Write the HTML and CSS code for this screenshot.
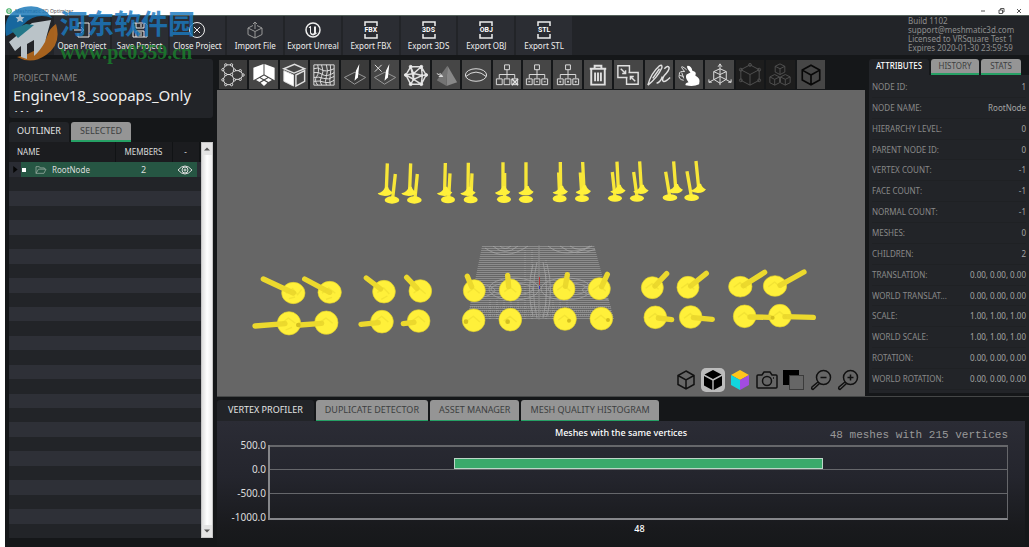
FILE: index.html
```html
<!DOCTYPE html>
<html lang="en">
<head>
<meta charset="utf-8">
<title>Meshmatic 3D Optimizer</title>
<link rel="stylesheet" href="styles.css">
</head>
<body>
<svg class="defs" aria-hidden="true">
  <defs>
    <symbol id="frame" viewBox="0 0 16 20"><path d="M2 6V2H14V6M2 14V18H14V14" fill="none" stroke="currentColor" stroke-width="1.5"/></symbol>
    <symbol id="tree" viewBox="0 0 29 29"><path d="M12 4h5v5h-5zM14.500 9v9M6.500 18v-4h16v4M3.500 18.500h6v6h-6zM11.500 18.500h6v6h-6zM19.500 18.500h6v6h-6z"/></symbol>
    <symbol id="cube" viewBox="0 0 22 22"><path d="M11 2L19 6.500V15.500L11 20L3 15.500V6.500ZM3 6.500L11 11L19 6.500M11 11V20"/></symbol>
  </defs>
</svg>
<div class="titlebar">
  <svg class="app-icon" viewBox="0 0 8 8"><circle cx="4" cy="4" r="3" fill="none" stroke="#3fae63" stroke-width="1.500"/><path d="M2 4h4" stroke="#2d7a48"/></svg>
  <span class="app-title">Meshmatic 3D Optimizer</span>
  <div class="window-buttons">
    <button aria-label="Minimize"><svg viewBox="0 0 8 8"><path d="M2 4h4"/></svg></button>
    <button aria-label="Restore"><svg viewBox="0 0 8 8"><path d="M2 3h3.500v3.500H2zM3.500 3V1.500H7V5H5.500"/></svg></button>
    <button aria-label="Close"><svg viewBox="0 0 8 8"><path d="M2 2l4 4M6 2L2 6"/></svg></button>
  </div>
</div>
<div class="app">
  <header class="header">
    <nav class="actions">
      <button><svg viewBox="0 0 20 20"><path d="M6 7V3H17V17H6V13M2 10H12M9 7l3 3-3 3"/></svg>Open Project</button>
      <button><svg viewBox="0 0 20 20"><path d="M3 3H15L17 5V17H3ZM6 3V8H14V3M11 4V7M6 17V11H14V17M8 13h4M8 15h4"/></svg>Save Project</button>
      <button><svg viewBox="0 0 20 20"><circle cx="10" cy="10" r="7.500"/><path d="M7 7l6 6M13 7l-6 6"/></svg>Close Project</button>
      <button><svg class="faint" viewBox="0 0 20 20"><path d="M8 5.500L3 8V14.500L10 18L17 14.500V8L12 5.500M3 8L10 11.500L17 8M10 11.500V18M10 9V2M8 4l2-2 2 2"/></svg>Import File</button>
      <button><svg viewBox="0 0 20 20"><circle cx="10" cy="10" r="7" stroke-width="1.500"/><path d="M5.500 8Q7 5.500 8 6V12.500Q9.500 14.500 11 13V6.500H13V12Q13 14 15 12Q13 15 10.500 15.500Q7 15 7 12.500V8Z" fill="currentColor" stroke="none"/></svg>Export Unreal</button>
      <button><span class="format"><svg viewBox="0 0 16 20"><use href="#frame"/></svg><b>FBX</b></span>Export FBX</button>
      <button><span class="format"><svg viewBox="0 0 16 20"><use href="#frame"/></svg><b>3DS</b></span>Export 3DS</button>
      <button><span class="format"><svg viewBox="0 0 16 20"><use href="#frame"/></svg><b>OBJ</b></span>Export OBJ</button>
      <button><span class="format"><svg viewBox="0 0 16 20"><use href="#frame"/></svg><b>STL</b></span>Export STL</button>
    </nav>
    <div class="license"><span>Build 1102</span><span>support@meshmatic3d.com</span><span>Licensed to VRSquare Test 1</span><span>Expires 2020-01-30 23:59:59</span></div>
  </header>

  <aside class="sidebar">
    <section class="project">
      <div class="project-label">PROJECT NAME</div>
      <h1 class="project-name">Enginev18_soopaps_Only (1).fbx</h1>
    </section>
    <div class="tabs side-tabs"><button class="tab active">OUTLINER</button><button class="tab">SELECTED</button></div>
    <div class="outliner">
      <div class="outline-list">
        <table class="outline-table">
          <thead><tr><th class="col-name">NAME</th><th class="col-members">MEMBERS</th><th class="col-eye">-</th></tr></thead>
          <tbody><tr>
            <td><div class="node"><svg class="arrow" viewBox="0 0 6 8"><path d="M1 0L6 4L1 8Z"/></svg><i class="square"></i><svg class="folder" viewBox="0 0 14 12"><path d="M1 10V2H5L6 3.500H11V5M1 10L4 5H13L10.500 10Z"/></svg>RootNode</div></td>
            <td class="count">2</td>
            <td class="eye-cell"><svg class="eye" viewBox="0 0 16 12"><path d="M1 6Q8-2 15 6Q8 14 1 6Z"/><circle cx="8" cy="6" r="3"/><circle cx="8" cy="6" r="1"/></svg></td>
          </tr></tbody>
        </table>
        <div class="stripes"><i></i><i></i><i></i><i></i><i></i><i></i><i></i><i></i><i></i><i></i><i></i><i></i><i></i><i></i><i></i><i></i><i></i><i></i><i></i><i></i><i></i><i></i><i></i><i></i><i></i></div>
      </div>
      <div class="scrollbar"><button aria-label="Scroll up"><svg viewBox="0 0 8 6"><path d="M1 4.500L4 1.500L7 4.500Z"/></svg></button><button aria-label="Scroll down"><svg viewBox="0 0 8 6"><path d="M1 1.500L4 4.500L7 1.500Z"/></svg></button></div>
    </div>
  </aside>

  <main class="stage">
    <div class="tools">
      <button class="dark" aria-label="Molecule"><svg viewBox="0 0 29 29"><path d="M7 4h6l3 5-3 5H7L4 9zM7 14h6l3 5.500-3 5H7l-3-5zM16 10h6l3 4.500-3 4.500h-6"/><g fill="#3a3a3a"><circle cx="7" cy="4" r="1.200"/><circle cx="13" cy="4" r="1.200"/><circle cx="4" cy="9" r="1.200"/><circle cx="16" cy="9.500" r="1.200"/><circle cx="7" cy="14" r="1.200"/><circle cx="13" cy="14" r="1.200"/><circle cx="22" cy="10" r="1.200"/><circle cx="25" cy="14.500" r="1.200"/><circle cx="22" cy="19" r="1.200"/><circle cx="16" cy="19.500" r="1.200"/><circle cx="4" cy="19.500" r="1.200"/><circle cx="7" cy="24.500" r="1.200"/><circle cx="13" cy="24.500" r="1.200"/></g></svg></button>
      <button aria-label="Floor grid"><svg viewBox="0 0 29 29"><g fill="#fff" stroke="none"><path d="M3.500 7L14 3V14L3.500 20ZM15 3L25.500 7V20L15 14Z"/><path d="M14.500 15L18 17L14.500 19L11 17ZM10 17.700L13.300 19.700L9.800 21.700L6.300 19.700ZM19 17.700L22.700 19.700L19.200 21.700L15.700 19.700ZM14.500 20.500L18 22.500L14.500 26L11 22.500Z"/></g></svg></button>
      <button aria-label="Bounding box"><svg viewBox="0 0 29 29"><path fill="#fff" d="M4 10L14 14.500V26L4 21Z"/><path stroke-width="1.500" d="M4 8L15 3.500L25.500 8L14.500 12.500ZM16.500 14.500L25.500 10V21L16.500 26Z"/></svg></button>
      <button aria-label="Wireframe"><svg viewBox="0 0 29 29"><path d="M4 4H25V25H4ZM8 4Q10 12 7 16T8 25M12 4Q15 11 12 16T12 25M17 4Q19 10 17 16T17 25M21 4Q22 10 21 15T21 25M4 8Q8 6 12 9T25 8M4 12Q9 11 13 14T25 12M4 17Q9 16 14 18T25 16M4 21Q10 20 15 22T25 20"/></svg></button>
      <button class="dark" aria-label="Show normals"><svg viewBox="0 0 29 29"><path class="thin" d="M3.500 17L14.500 11.500L25.500 17L14 24Z"/><path fill="#fff" stroke="none" d="M19 3L17.500 17L14 20.500L15.500 10Z"/></svg></button>
      <button aria-label="Remove normals"><svg viewBox="0 0 29 29"><path class="thin" d="M3.500 17L14.500 11.500L25.500 17L14 24Z"/><path fill="#fff" stroke="none" d="M19 3L17.500 17L14 20.500L15.500 10Z"/><path d="M4 4l7 7M11 4l-7 7"/></svg></button>
      <button aria-label="Mesh nodes"><svg viewBox="0 0 29 29"><path stroke-width="1.500" d="M9 6L20 6L25 14.500L20 24H9L4 14.500ZM9 6L12 13L20 6L21 15L25 14.500M12 13L4 14.500L12 19L9 24M12 13L21 15L12 19ZM21 15L20 24L12 19M9 6L12 19"/><g fill="#eee"><circle cx="9" cy="6" r="1.500"/><circle cx="20" cy="6" r="1.500"/><circle cx="25" cy="14.500" r="1.500"/><circle cx="20" cy="24" r="1.500"/><circle cx="9" cy="24" r="1.500"/><circle cx="4" cy="14.500" r="1.500"/><circle cx="12" cy="13" r="1"/><circle cx="21" cy="15" r="1"/><circle cx="12" cy="19" r="1"/></g></svg></button>
      <button aria-label="Pyramid"><svg viewBox="0 0 29 29"><path fill="#888" stroke="none" d="M16 5L26 22L15 26Z"/><path fill="#747474" stroke="none" d="M16 5L15 26L5 20Z"/><path d="M5 13l6 3M8 12.500l3 3.500-4 0"/></svg></button>
      <button aria-label="Ring"><svg viewBox="0 0 29 29"><ellipse cx="14.500" cy="14.500" rx="11" ry="6.500"/><path d="M4 16Q14.500 7 25 16"/></svg></button>
      <button aria-label="Delete branch"><svg viewBox="0 0 29 29"><use href="#tree"/><path stroke-width="1.500" d="M19.500 18.500l6.500 6.500M26 18.500l-6.500 6.500"/></svg></button>
      <button aria-label="Collapse branch"><svg viewBox="0 0 29 29"><use href="#tree"/><path d="M5.500 21.500h2M13.500 21.500h2M21.500 21.500h2"/></svg></button>
      <button aria-label="Group branch"><svg viewBox="0 0 29 29"><use href="#tree"/><path d="M6 21h1v1H6zM14 21h1v1h-1zM22 21h1v1h-1z"/></svg></button>
      <button aria-label="Delete"><svg viewBox="0 0 29 29"><path stroke-width="2" d="M6 8H23M11 7V5H18V7M7.500 9V24.500H21.500V9M11.500 12V21M14.500 12V21M17.500 12V21"/></svg></button>
      <button aria-label="Merge"><svg viewBox="0 0 29 29"><path stroke-width="1.500" d="M14 17H4V5H16V12M15 12H25V24H13V17M7 8l5 5M12 9.500V13H8.500M22 21l-5-5M17 19.500V16H20.500"/></svg></button>
      <button aria-label="Stitch"><svg viewBox="0 0 29 29"><path stroke-width="1.500" d="M3 25Q6 13 15 5Q18 3 17.500 7Q13 17 3 25M8 18L15 8M20 8Q24 4 25 7Q25 10 20 15Q17 20 19 21Q21 22 26 17M12 23Q16 22 18 16"/></svg></button>
      <button aria-label="Simplify mesh"><svg viewBox="0 0 29 29"><path d="M12 9Q6 4 7 7L10 11Q4 10 4.500 14Q3 19 9 20M7 12l2 6M5 15l4 1"/><path fill="#fff" stroke="none" d="M16 12Q11 6 13 5Q17 5 18 10Q23 11 21 15Q27 18 25 24Q19 27 11 25Q10 23 14 22Q10 17 12 14Z"/></svg></button>
      <button aria-label="Pivot"><svg viewBox="0 0 29 29"><path d="M14.500 3V25M12.500 6l2-3 2 3M14.500 16L3 22M14.500 16L26 22M3 19v3h3M26 19v3h-3M8 11L14.500 8L21 11V19L14.500 23L8 19ZM8 11L14.500 14L21 11"/></svg></button>
      <button class="off" aria-label="Cube nodes" disabled><svg viewBox="0 0 29 29"><path d="M14.500 4L24 9V20L14.500 25L5 20V9ZM5 9L14.500 14L24 9M14.500 14V25"/><circle cx="14.500" cy="4" r="1.500"/><circle cx="24" cy="9" r="1.500"/><circle cx="24" cy="20" r="1.500"/><circle cx="5" cy="20" r="1.500"/><circle cx="5" cy="9" r="1.500"/></svg></button>
      <button class="off" aria-label="Cube stack" disabled><svg viewBox="0 0 29 29"><path d="M14.500 3l5 2.500v6l-5 2.500-5-2.500v-6zM9.500 5.500l5 2.500 5-2.500M14.500 8v6M9 14l5 2.500v6L9 25l-5-2.500v-6zM4 16.500L9 19l5-2.500M9 19v6M20 14l5 2.500v6L20 25l-5-2.500v-6zM15 16.500l5 2.500 5-2.500M20 19v6"/></svg></button>
      <button class="ink" aria-label="Cube"><svg viewBox="0 0 22 22"><use href="#cube"/></svg></button>
    </div>
    <div class="viewport">
      <svg class="scene" viewBox="217 90 648 306" preserveAspectRatio="xMidYMid slice" role="img" aria-label="Engine valves in the 3D view">
        <defs>
          <pattern id="lines" width="3" height="2" patternUnits="userSpaceOnUse"><path d="M0 .5H3" stroke="#aaa" stroke-width=".8" opacity=".7"/></pattern>
          <clipPath id="floor"><path d="M482 246L594 245L614 319L467 320Z"/></clipPath>
        </defs>
        <g clip-path="url(#floor)">
          <path fill="url(#lines)" d="M460 240H620V325H460Z"/>
          <g fill="none" stroke="#b0b0b0" stroke-width="1" opacity=".6">
            <ellipse cx="512" cy="289" rx="21" ry="6"/><ellipse cx="514" cy="289" rx="25" ry="11"/><ellipse cx="568" cy="289" rx="20" ry="6"/><ellipse cx="566" cy="289" rx="25" ry="11"/>
            <path d="M537 262Q530 290 537 318M533 264Q526 290 533 316M543 262Q550 290 543 318M547 264Q554 290 547 316"/>
            <path d="M485 248Q505 262 528 246M493 246Q505 257 518 246M500 246Q505 251 511 246M548 246Q565 260 592 246M560 246Q575 258 596 249M570 246Q580 253 590 246M620 280Q545 289 620 302M624 284Q570 289 624 297M460 280Q530 290 460 302M460 284Q505 290 460 296"/>
            <path stroke-dasharray="1 1" d="M470 307H612M468 311H613M468 315H614M490 300V320M497 300V320M504 300V320M511 300V320M518 300V320M525 250V320M532 250V320M539 245V320M546 260V320M553 300V320M560 300V320M567 300V320"/>
          </g>
          <path d="M539.500 277V285" stroke="#b33"/><path d="M539.500 286V289" stroke="#33b"/>
        </g>
        <g transform="translate(370 150) scale(.3333)" fill="#fff03a" stroke="none">
          <path fill="none" stroke="#f7e638" stroke-width="10" d="M52 40L49 120M122 40L119 120M226 39L224 120M295 38L294 120M399 37V120M468 37V120M571 36L572 118M638 36L642 118M741 35L745 115M809 34L814 115M911 34L917 112M978 33L986 112M76 72L68 145M142 72L135 145M240 70L236 145M306 70L303 145M404 69V145M566 67L569 142M631 67L636 142M727 66L735 140M791 66L801 140M887 65L899 138M951 64L964 138"/>
          <g>
            <path id="cone" d="M23 130Q41 125 46 110H54Q58 123 69 127Q63 138 45 138Q26 137 23 130Z"/>
            <use href="#cone" x="71"/><use href="#cone" x="178"/><use href="#cone" x="248"/><use href="#cone" x="352" y="-2"/><use href="#cone" x="422" y="-2"/><use href="#cone" x="525" y="-3"/><use href="#cone" x="594" y="-4"/><use href="#cone" x="698" y="-6"/><use href="#cone" x="767" y="-6"/><use href="#cone" x="870" y="-8"/><use href="#cone" x="939" y="-9"/>
          </g>
          <ellipse cx="66" cy="150" rx="22" ry="11"/><ellipse cx="133" cy="150" rx="22" ry="11"/><ellipse cx="234" cy="149" rx="21" ry="11"/><ellipse cx="302" cy="149" rx="21" ry="11"/><ellipse cx="402" cy="148" rx="21" ry="11"/><ellipse cx="468" cy="148" rx="21" ry="11"/><ellipse cx="569" cy="146" rx="21" ry="11"/><ellipse cx="636" cy="146" rx="21" ry="10"/><ellipse cx="735" cy="145" rx="21" ry="10"/><ellipse cx="801" cy="145" rx="21" ry="10"/><ellipse cx="900" cy="143" rx="22" ry="10"/><ellipse cx="965" cy="143" rx="22" ry="10"/>
        </g>
        <g class="valves" transform="translate(250 240) scale(.3333)">
          <g class="discs"><ellipse cx="130" cy="159" rx="35" ry="32"/><ellipse cx="239" cy="157" rx="35" ry="33"/><circle cx="402" cy="155" r="34"/><circle cx="511" cy="153" r="34"/><circle cx="673" cy="152" r="33"/><circle cx="781" cy="150" r="33"/><circle cx="117" cy="250" r="35"/><circle cx="229" cy="248" r="35"/><circle cx="396" cy="245" r="34"/><circle cx="506" cy="243" r="34"/><circle cx="671" cy="241" r="34"/><circle cx="781" cy="239" r="34"/></g>
          <path class="stem" d="M40 117L130 159M164 117L239 157M349 114L392 147M470 112L501 145M652 109L665 140M773 106L776 140M15 258L105 251M150 255L215 250M333 253L385 248M460 251L492 247"/>
          <path class="grain" d="M108 160l20-14 15 18 12-16M117 176l18-5M216 160l20-16 20 16M228 178l18-6M382 158l19-14 17 18M394 178l18-10M491 159l18-13 18 15M653 158l18-13 18 15M763 155l18-13 18 15M97 248l18-14 21 16M107 270l19-8M209 248l19-14 20 16M376 243l19-14 20 17M486 243l19-14 20 17M651 243l19-14 20 17M761 243l19-14 20 17"/>
          <path class="shade" d="M138 255a7 7 0 1014 0 7 7 0 10-14 0M641 245a7 7 0 1014 0 7 7 0 10-14 0M766 245a7 7 0 1014 0 7 7 0 10-14 0"/>
        </g>
        <g class="valves" transform="translate(530 240) scale(.3333)">
          <g class="discs"><circle cx="102" cy="147" r="33"/><circle cx="208" cy="146" r="33"/><circle cx="367" cy="143" r="33"/><circle cx="474" cy="142" r="33"/><ellipse cx="631" cy="140" rx="35" ry="31"/><ellipse cx="735" cy="138" rx="35" ry="31"/><circle cx="105" cy="237" r="34"/><circle cx="214" cy="236" r="34"/><circle cx="376" cy="232" r="34"/><circle cx="482" cy="231" r="34"/><circle cx="644" cy="229" r="34"/><circle cx="750" cy="227" r="34"/></g>
          <path class="stem" d="M112 104L106 139M232 103L215 140M410 101L375 138M529 100L482 138M704 97L640 137M822 96L750 136M425 239L385 234M547 238L490 233M720 232L660 231M850 232L765 230"/>
          <path class="grain" d="M82 150l19-14 20 17M188 150l19-14 20 17M347 145l19-14 20 17M454 145l19-14 20 17M611 142l19-14 20 17M715 140l19-14 20 17M85 240l19-14 20 17M194 240l19-14 20 17M356 235l19-14 20 17M462 235l19-14 20 17M624 232l19-14 20 17M730 229l19-14 20 17"/>
          <path class="shade" d="M111 242a6 6 0 1012 0 6 6 0 10-12 0M228 240a6 6 0 1012 0 6 6 0 10-12 0M722 233a6 6 0 1012 0 6 6 0 10-12 0"/>
        </g>
      </svg>
      <div class="view-controls">
        <button aria-label="Wire view"><svg viewBox="0 0 22 22"><use href="#cube"/></svg></button>
        <button class="selected" aria-label="Solid view"><svg viewBox="0 0 22 22"><path fill="#000" stroke="none" d="M11 1L19.500 5.500L11 10L2.500 5.500ZM2 7L10.300 11.500V21L2 16.500ZM20 7L11.700 11.500V21L20 16.500Z"/></svg></button>
        <button aria-label="Color view"><svg viewBox="0 0 22 22"><g stroke="none"><path fill="#ffc51b" d="M11 1L20 6L11 11L2 6Z"/><path fill="#12d6de" d="M2 6L11 11V21L2 16Z"/><path fill="#a24ce0" d="M20 6L11 11V21L20 16Z"/></g></svg></button>
        <button aria-label="Snapshot"><svg viewBox="0 0 22 22"><path d="M2 6H6L8 3H14L16 6H20Q21 6 21 7V18Q21 19 20 19H2Q1 19 1 18V7Q1 6 2 6Z"/><circle cx="11" cy="12" r="4.500"/><path d="M17 9h1"/></svg></button>
        <button aria-label="Background"><svg viewBox="0 0 22 22"><path fill="#000" stroke="none" d="M0 1H16V6H6V16H0Z"/><path stroke-width="1" stroke-dasharray="1 1" d="M6.500 6.500H20.500V20.500H6.500Z"/></svg></button>
        <button aria-label="Zoom out"><svg viewBox="0 0 22 22"><circle cx="13.500" cy="8.500" r="7"/><path d="M10.500 8.500h6M8 13L2 18Q1 20 3 20.500L9.500 14.500"/></svg></button>
        <button aria-label="Zoom in"><svg viewBox="0 0 22 22"><circle cx="13.500" cy="8.500" r="7"/><path d="M10.500 8.500h6M13.500 5.500v6M8 13L2 18Q1 20 3 20.500L9.500 14.500"/></svg></button>
      </div>
    </div>
  </main>

  <aside class="attributes">
    <div class="tabs attr-tabs"><button class="tab active">ATTRIBUTES</button><button class="tab">HISTORY</button><button class="tab">STATS</button></div>
    <dl class="attr-list">
      <div><dt>NODE ID:</dt><dd>1</dd></div>
      <div><dt>NODE NAME:</dt><dd>RootNode</dd></div>
      <div><dt>HIERARCHY LEVEL:</dt><dd>0</dd></div>
      <div><dt>PARENT NODE ID:</dt><dd>0</dd></div>
      <div><dt>VERTEX COUNT:</dt><dd>-1</dd></div>
      <div><dt>FACE COUNT:</dt><dd>-1</dd></div>
      <div><dt>NORMAL COUNT:</dt><dd>-1</dd></div>
      <div><dt>MESHES:</dt><dd>0</dd></div>
      <div><dt>CHILDREN:</dt><dd>2</dd></div>
      <div><dt>TRANSLATION:</dt><dd>0.00, 0.00, 0.00</dd></div>
      <div><dt>WORLD TRANSLAT...</dt><dd>0.00, 0.00, 0.00</dd></div>
      <div><dt>SCALE:</dt><dd>1.00, 1.00, 1.00</dd></div>
      <div><dt>WORLD SCALE:</dt><dd>1.00, 1.00, 1.00</dd></div>
      <div><dt>ROTATION:</dt><dd>0.00, 0.00, 0.00</dd></div>
      <div><dt>WORLD ROTATION:</dt><dd>0.00, 0.00, 0.00</dd></div>
    </dl>
  </aside>

  <section class="profiler">
    <div class="tabs profiler-tabs"><button class="tab active">VERTEX PROFILER</button><button class="tab">DUPLICATE DETECTOR</button><button class="tab">ASSET MANAGER</button><button class="tab">MESH QUALITY HISTOGRAM</button></div>
    <div class="chart">
      <div class="chart-head"><span></span><h2>Meshes with the same vertices</h2><span class="summary">48 meshes with 215 vertices</span></div>
      <div class="chart-body">
        <div class="y-axis"><span>500.0</span><span>0.0</span><span>-500.0</span><span>-1000.0</span></div>
        <div class="plot"><div class="band"><div class="bar"></div></div><div class="band"></div><div class="band"></div></div>
      </div>
      <div class="x-axis">48</div>
    </div>
  </section>
</div>
<div class="watermark">
  <svg viewBox="0 0 58 58"><path fill="#1576b8" d="M4 32Q0 8 22 3Q40-1 50 14Q34 8 22 20Q10 30 4 32Z"/><path fill="#c4701c" d="M54 20Q60 40 44 51Q30 61 15 53Q40 48 46 30Q48 24 54 20Z"/><path fill="#dce6ec" d="M7 38L30 19L49 16L43 38Q38 47 32 52V36L25 40V55L19 53V42L13 47Z"/><path fill="#258b9f" d="M9 26L24 20L32 21L16 34Z"/><path fill="#cfe4f2" d="M18 10l1.500 3 3 .3-2.300 2 .8 3-3-1.600-3 1.600.8-3-2.300-2 3-.3Z"/></svg>
  <div class="watermark-text"><span class="site-name" lang="zh">河东软件园</span><span class="site-url">www.pc0359.cn</span></div>
</div>
</body>
</html>
```

FILE: styles.css
```css
* { box-sizing: border-box; }
body {
  margin: 0;
  min-height: 100vh;
  display: flex;
  flex-direction: column;
  background: #fff;
  color: #ddd;
  font: 9px/12px "Noto Sans", "Open Sans", sans-serif;
}
button { margin: 0; padding: 0; border: 0; background: none; color: inherit; font: inherit; }
svg { display: block; fill: none; stroke: currentColor; }
.defs { position: absolute; width: 0; height: 0; }

.titlebar { display: flex; align-items: center; height: 15px; padding: 6px 0 0 6px; gap: 3px; color: #555; }
.app-icon { width: 6px; height: 6px; }
.app-title { font-size: 5px; line-height: 8px; }
.window-buttons { margin-left: auto; display: flex; gap: 10px; padding-right: 6px; }
.window-buttons svg { width: 8px; height: 8px; stroke-width: 1; }

.app {
  flex: 1;
  margin-left: 5px;
  display: grid;
  grid-template-columns: 212px minmax(0, 1fr) 164px;
  grid-template-rows: 40px 341px minmax(151px, 1fr);
  background: #151719;
}

.header { grid-column: 1 / -1; display: flex; justify-content: space-between; background: #222428; border-top: 1px solid #536059; padding-left: 49px; }
.actions { width: 518px; display: grid; grid-template-columns: repeat(9, 1fr); gap: 2px; }
.actions button { display: flex; flex-direction: column; align-items: center; padding-top: 4px; background: #2b2d33; white-space: nowrap; font-size: 8px; color: #eee; }
.actions svg { width: 20px; height: 20px; }
.actions .faint { color: #999; }
.format { display: grid; place-items: center; width: 20px; height: 20px; }
.format > * { grid-area: 1 / 1; }
.format svg { width: 16px; }
.format b { background: #2b2d33; font: bold 7px/7px Roboto, sans-serif; color: #fff; }
.license { width: 121px; color: #8e8e8e; display: flex; flex-direction: column; white-space: nowrap; font-size: 8px; line-height: 9px; }

.sidebar { grid-row: 2 / 4; padding: 4px 4px 9px; display: flex; flex-direction: column; }
.project { height: 59px; padding: 12px 4px 0; background: #222428; border-radius: 3px; border-bottom: 6px solid #222428; overflow: hidden; }
.project-label { font-size: 9px; line-height: 14px; color: #858585; }
.project-name { margin: 0; font-size: 15px; line-height: 20px; font-weight: 400; color: #eee; }

.tabs { display: flex; gap: 2px; }
.tab { background: #959595; color: #3c3e40; border-bottom: 2px solid #26a065; border-radius: 3px 3px 0 0; white-space: nowrap; }
.tab.active { background: #222428; color: #e4e4e4; border-bottom-color: #222428; }
.side-tabs { margin-top: 4px; height: 20px; }
.side-tabs .tab { width: 60px; }
.outliner { flex: 1; display: flex; }
.outline-list { flex: 1; display: flex; flex-direction: column; }
.outline-table { width: 100%; table-layout: fixed; border-collapse: collapse; }
.outline-table th { height: 20px; padding: 0; font-weight: 400; font-size: 8px; background: #1b1c1f; border-right: 1px solid #111315; }
.outline-table .col-name { width: 106px; text-align: left; padding-left: 8px; }
.outline-table .col-members { width: 57px; }
.outline-table td { height: 15px; padding: 0; background: #265643; text-align: center; line-height: 14px; }
.outline-table tbody td:last-child { border-right: 4px solid #2a2c33; }
.node { display: flex; align-items: center; font-size: 8px; }
.arrow { width: 12px; height: 15px; padding: 4px 3px; background: #2a2c33; stroke: none; }
.arrow path { fill: #060606; }
.square { width: 4px; height: 4px; background: #fff; margin: 0 9px 0 1px; }
.folder { width: 12px; height: 10px; color: #91a79b; margin-right: 5px; }
.eye { width: 16px; height: 12px; margin: 0 auto; }
.stripes { flex: 1; display: grid; grid-auto-rows: 1fr; }
.stripes i { background: #222428; }
.stripes i:nth-child(even) { background: #2e3037; }
.scrollbar { width: 12px; display: flex; flex-direction: column; justify-content: space-between; background: linear-gradient(90deg, #ddd, #fff 50%, #eee); border: 1px solid #c5c5c5; }
.scrollbar button { height: 12px; background: #e4e4e4; color: #555; display: grid; place-items: center; }
.scrollbar svg { width: 8px; height: 6px; fill: #555; stroke: none; }

.stage { display: flex; flex-direction: column; min-width: 0; padding-top: 5px; }
.tools { width: 606px; margin: 0 0 1px 2px; height: 29px; display: grid; grid-template-columns: repeat(20, 1fr); gap: 2px; color: #e0e0e0; }
.tools button { background: #464646; display: grid; place-items: center; }
.tools svg { width: 28px; height: 28px; }
.tools .thin { stroke: #999; }
.tools .dark { background: #3a3a3a; }
.tools .off { background: #1d1d1d; color: #505050; }
.tools .ink { color: #080808; }
.tools .ink svg { width: 24px; height: 24px; stroke-width: 1.5; }
.viewport { flex: 1; display: grid; background: #666; min-height: 0; }
.scene { grid-area: 1 / 1; width: 100%; height: 100%; min-height: 0; }
.valves .discs { fill: #fff03a; stroke: #e3d12c; stroke-width: 2; }
.stem { stroke: #ecd92d; stroke-width: 16; stroke-linecap: round; }
.grain { stroke: #e7d72e; stroke-width: 4; opacity: .5; }
.shade { fill: #d3bf20; stroke: none; }
.view-controls { grid-area: 1 / 1; align-self: end; justify-self: end; display: flex; gap: 3px; padding: 0 5px 4px; color: #111; }
.view-controls button { width: 24px; height: 24px; display: grid; place-items: center; border-radius: 5px; }
.view-controls svg { width: 22px; height: 22px; stroke-width: 1.5; }
.view-controls .selected { background: #bcbcbc; }

.attributes { padding: 4px 0 3px 4px; display: flex; flex-direction: column; }
.attr-tabs { height: 16px; }
.attr-tabs .tab { width: 48px; font-size: 8px; }
.attr-tabs .active { width: 60px; font-weight: 500; color: #fff; }
.attr-tabs .tab:last-child { width: 40px; }
.attr-list { flex: 1; margin: 0; padding: 2px 3px 3px; background: #222428; display: flex; flex-direction: column; color: #898989; font-size: 8px; }
.attr-list div { flex: 1; display: flex; align-items: center; justify-content: space-between; border-bottom: 1px solid #1f2124; }
.attr-list dd { margin: 0; color: #a4a4a4; }

.profiler { grid-column: 2 / 4; display: flex; flex-direction: column; padding: 3px 4px 1px 0; border-top: 1px solid #454747; }
.profiler-tabs { height: 21px; }
.profiler-tabs .tab { padding: 0 9px; border-bottom-width: 1px; }
.profiler-tabs .active { padding: 0 11px; }
.chart { flex: 1; background: linear-gradient(#2b2c35, #24252d 45%, #191a1d 85%, #16181a); display: flex; flex-direction: column; }
.chart-head { display: grid; grid-template-columns: 1fr auto 1fr; height: 18px; padding: 6px 17px 0 17px; }
.chart-head h2 { margin: 0; font-size: 9px; line-height: 12px; font-weight: 500; color: #fff; }
.summary { text-align: right; font: 11px/16px "Liberation Mono", monospace; color: #999; }
.chart-body { display: flex; padding-right: 17px; }
.y-axis { width: 51px; height: 84px; padding-right: 2px; display: flex; flex-direction: column; justify-content: space-between; text-align: right; font-size: 10px; }
.plot { flex: 1; margin: 6px 0 3px; border-left: 2px solid #85868a; border-right: 1px solid #66676b; border-bottom: 2px solid #85868a; }
.band { height: 24px; border-top: 1px solid #66676b; display: flex; align-items: flex-end; }
.band:first-child { border-top-width: 2px; }
.bar { width: 50%; margin-left: 25%; height: 11px; background: #3aaa6b; border: 1px solid #bbd6c7; }
.x-axis { padding-left: 37px; text-align: center; color: #fff; font-weight: 500; }

.watermark { position: absolute; top: 4px; left: 2px; display: flex; opacity: .82; pointer-events: none; }
.watermark svg { width: 58px; height: 58px; stroke: none; }
.watermark-text { display: flex; flex-direction: column; color: #1b79c0; white-space: nowrap; }
.site-name { font: bold 27px/38px "Noto Sans CJK SC", sans-serif; }
.site-url { font: bold 20px/20px "Liberation Serif", serif; color: #19802c; }
```
